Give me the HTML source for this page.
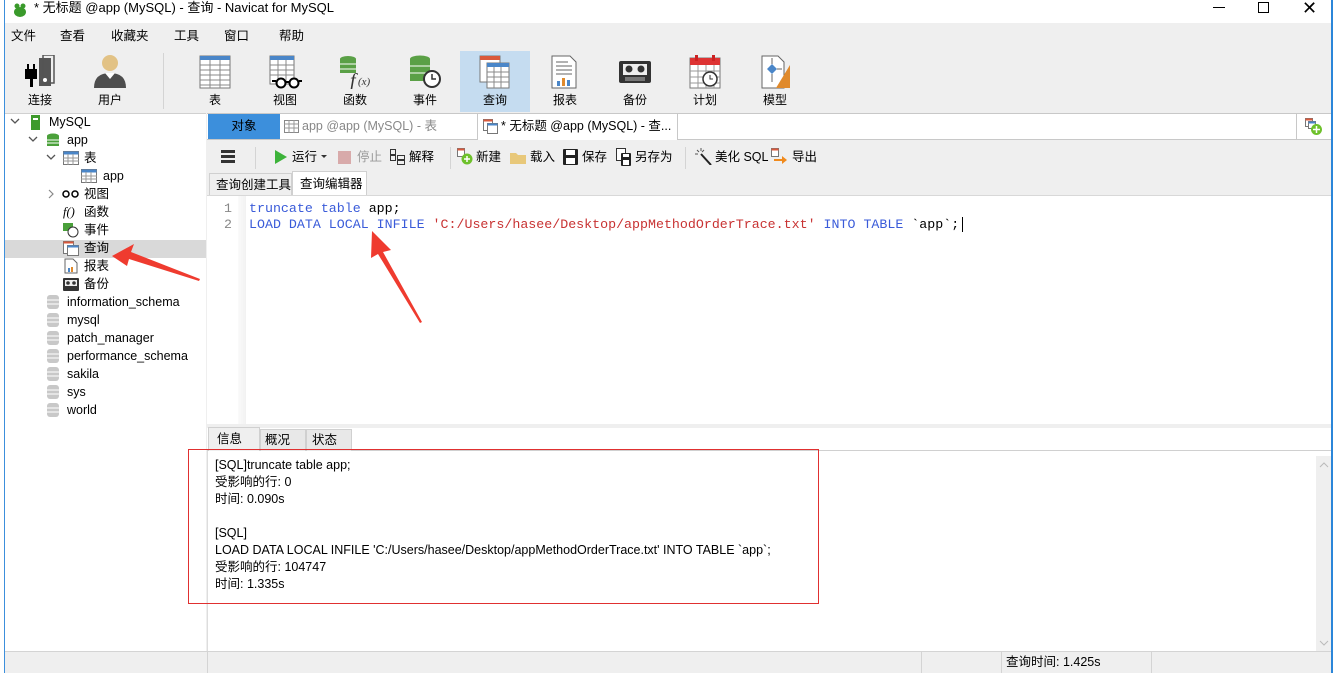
<!DOCTYPE html>
<html><head><meta charset="utf-8"><style>
*{margin:0;padding:0;box-sizing:border-box}
body{width:1333px;height:673px;overflow:hidden;background:#efefef;font-family:"Liberation Sans","Noto Sans CJK SC",sans-serif;font-size:12px;line-height:16px;color:#000;position:relative}
.a{position:absolute;white-space:nowrap}
.mono{font-family:"Liberation Mono","Noto Sans CJK SC",monospace;font-size:13.3px;line-height:16px}
.kw{color:#3a5bd9}.st{color:#c83232}
.tb{position:absolute;top:51px;width:70px;height:61px;text-align:center}
.tb svg{position:absolute;left:18px;top:4px}
.tb span{position:absolute;left:0;right:0;top:41px;font-size:12px;line-height:16px}
.tr{position:absolute;font-size:12.5px;line-height:16px;white-space:nowrap}
</style></head><body>
<div class="a" style="left:0;top:0;width:5px;height:673px;background:#fff;border-right:1px solid #3c8fdc"></div>
<div class="a" style="right:0;top:0;width:2px;height:673px;background:#2b86d9"></div>
<div class="a" style="left:5px;top:0;width:1326px;height:23px;background:#fff"></div>
<svg class="a" style="left:12px;top:2px" width="16" height="16"><ellipse cx="8" cy="10" rx="6" ry="5" fill="#3a9a2b"/><circle cx="5" cy="4" r="2.5" fill="#3a9a2b"/><circle cx="11" cy="4" r="2.5" fill="#3a9a2b"/></svg>
<div class="a" style="left:34px;top:0px;font-size:13px">* 无标题 @app (MySQL) - 查询 - Navicat for MySQL</div>
<div class="a" style="left:1213px;top:7px;width:12px;height:1px;background:#000"></div>
<div class="a" style="left:1258px;top:2px;width:11px;height:11px;border:1px solid #000"></div>
<div class="a" style="left:1302px;top:-1px;font-size:18px;line-height:18px">✕</div>
<div class="tr" style="left:11px;top:28px">文件</div>
<div class="tr" style="left:60px;top:28px">查看</div>
<div class="tr" style="left:111px;top:28px">收藏夹</div>
<div class="tr" style="left:174px;top:28px">工具</div>
<div class="tr" style="left:224px;top:28px">窗口</div>
<div class="tr" style="left:279px;top:28px">帮助</div>
<div class="a" style="left:163px;top:53px;width:1px;height:56px;background:#d4d4d4"></div>
<div class="a" style="left:460px;top:51px;width:70px;height:61px;background:#c5dcf0"></div>
<div class="tb" style="left:5px"><svg width="34" height="34"><rect x="16" y="3" width="12" height="28" fill="#555"/><rect x="20" y="0" width="11" height="28" fill="none" stroke="#555" stroke-width="1.5"/><rect x="2" y="14" width="12" height="10" fill="#000"/><rect x="7" y="24" width="3" height="8" fill="#000"/><rect x="4" y="9" width="2" height="5" fill="#000"/><rect x="10" y="9" width="2" height="5" fill="#000"/><circle cx="22" cy="25" r="2" fill="#fff"/></svg><span>连接</span></div>
<div class="tb" style="left:75px"><svg width="34" height="34"><circle cx="17" cy="8" r="8" fill="#e2c285"/><path d="M1 33 Q1 18 17 18 Q33 18 33 33Z" fill="#4d4d4d"/><path d="M12 18 L17 24 L22 18Z" fill="#fff"/></svg><span>用户</span></div>
<div class="tb" style="left:180px"><svg width="34" height="34"><rect x="2" y="1" width="30" height="32" fill="#fff" stroke="#777"/><rect x="2" y="1" width="30" height="4" fill="#4a86c8"/><path d="M2 10H32M2 15H32M2 20H32M2 25H32M2 30H32M12 5V33M22 5V33" stroke="#888"/></svg><span>表</span></div>
<div class="tb" style="left:250px"><svg width="34" height="34"><rect x="2" y="1" width="24" height="28" fill="#fff" stroke="#777"/><rect x="2" y="1" width="24" height="4" fill="#4a86c8"/><path d="M2 10H26M2 15H26M2 20H26M10 5V29M18 5V29" stroke="#888"/><circle cx="13" cy="28" r="4.5" fill="#fff" stroke="#000" stroke-width="2"/><circle cx="26" cy="28" r="4.5" fill="#fff" stroke="#000" stroke-width="2"/><path d="M17 27H22M4 26H8M31 26H34" stroke="#000" stroke-width="2"/></svg><span>视图</span></div>
<div class="tb" style="left:320px"><svg width="34" height="34"><ellipse cx="10" cy="4" rx="8" ry="3" fill="#5aa046"/><rect x="2" y="4" width="16" height="14" fill="#5aa046"/><path d="M2 9H18M2 14H18" stroke="#fff"/><text x="12" y="32" font-family="Liberation Serif" font-style="italic" font-size="20" fill="#333">f</text><text x="20" y="30" font-family="Liberation Serif" font-style="italic" font-size="11" fill="#333">(x)</text></svg><span>函数</span></div>
<div class="tb" style="left:390px"><svg width="34" height="34"><ellipse cx="12" cy="4" rx="10" ry="3.5" fill="#5aa046"/><rect x="2" y="4" width="20" height="22" fill="#5aa046"/><path d="M2 11H22M2 18H22" stroke="#fff"/><circle cx="24" cy="24" r="8" fill="#fff" stroke="#333" stroke-width="2"/><path d="M24 19V24H28" stroke="#333" stroke-width="1.5" fill="none"/></svg><span>事件</span></div>
<div class="tb" style="left:460px"><svg width="34" height="34"><rect x="2" y="1" width="20" height="26" fill="#fff" stroke="#777"/><rect x="2" y="1" width="20" height="4" fill="#d9593c"/><rect x="9" y="8" width="22" height="25" fill="#fff" stroke="#777"/><rect x="9" y="8" width="22" height="4" fill="#4a86c8"/><path d="M9 17H31M9 22H31M9 27H31M16 12V33M23 12V33" stroke="#888"/></svg><span>查询</span></div>
<div class="tb" style="left:530px"><svg width="34" height="34"><path d="M4 1H22L28 7V33H4Z" fill="#fff" stroke="#666"/><path d="M8 7H20M8 11H24M8 15H24M8 19H24" stroke="#666"/><rect x="9" y="26" width="3" height="5" fill="#4a86c8"/><rect x="14" y="23" width="3" height="8" fill="#e08a2c"/><rect x="19" y="25" width="3" height="6" fill="#4a86c8"/></svg><span>报表</span></div>
<div class="tb" style="left:600px"><svg width="34" height="34"><rect x="1" y="6" width="32" height="22" rx="2" fill="#333"/><rect x="5" y="9" width="24" height="11" fill="#eee"/><circle cx="11" cy="14" r="3.5" fill="#333"/><circle cx="23" cy="14" r="3.5" fill="#333"/><rect x="7" y="22" width="20" height="4" fill="#777"/></svg><span>备份</span></div>
<div class="tb" style="left:670px"><svg width="34" height="34"><rect x="2" y="3" width="30" height="30" fill="#fff" stroke="#777"/><rect x="2" y="3" width="30" height="7" fill="#d33"/><rect x="7" y="0" width="3" height="6" fill="#c22"/><rect x="24" y="0" width="3" height="6" fill="#c22"/><path d="M2 16H32M2 22H32M2 28H32M10 10V33M18 10V33M26 10V33" stroke="#999"/><circle cx="22" cy="24" r="7" fill="#fff" stroke="#333" stroke-width="1.5"/><path d="M22 20V24H25" stroke="#333" fill="none"/></svg><span>计划</span></div>
<div class="tb" style="left:740px"><svg width="34" height="34"><path d="M4 1H20L26 7V33H4Z" fill="#fff" stroke="#666"/><path d="M14 9L19 14L14 19L9 14Z" fill="#4a86c8"/><path d="M14 3V9M14 19V27M19 14H24" stroke="#666"/><path d="M32 10V33H18Z" fill="#e08a2c"/></svg><span>模型</span></div>
<!-- sidebar -->
<div class="a" style="left:5px;top:113px;width:201px;height:538px;background:#fff;border-top:1px solid #d0d0d0"></div>
<div class="a" style="left:5px;top:240px;width:201px;height:18px;background:#d9d9d9"></div>
<svg class="a" style="left:10px;top:118px" width="10" height="8"><path d="M1 1L5 5L9 1" stroke="#555" fill="none" stroke-width="1.3"/></svg>
<svg class="a" style="left:30px;top:115px" width="12" height="15"><rect x="1" y="0" width="9" height="15" fill="#3e9a2c"/><rect x="3" y="3" width="5" height="2" fill="#fff"/></svg>
<div class="tr" style="left:49px;top:114px">MySQL</div>
<svg class="a" style="left:28px;top:136px" width="10" height="8"><path d="M1 1L5 5L9 1" stroke="#555" fill="none" stroke-width="1.3"/></svg>
<svg class="a" style="left:46px;top:133px" width="14" height="15"><ellipse cx="7" cy="3" rx="6" ry="2.5" fill="#4aa03a"/><rect x="1" y="3" width="12" height="10" fill="#4aa03a"/><path d="M1 7H13M1 10H13" stroke="#fff"/></svg>
<div class="tr" style="left:67px;top:132px">app</div>
<svg class="a" style="left:46px;top:154px" width="10" height="8"><path d="M1 1L5 5L9 1" stroke="#555" fill="none" stroke-width="1.3"/></svg>
<svg class="a" style="left:63px;top:151px" width="16" height="14"><rect x="0.5" y="0.5" width="15" height="13" fill="#fff" stroke="#777"/><rect x="0.5" y="0.5" width="15" height="3" fill="#4a86c8"/><path d="M0 7H16M0 10H16M5 3V14M10 3V14" stroke="#999"/></svg>
<div class="tr" style="left:84px;top:150px">表</div>
<svg class="a" style="left:81px;top:169px" width="16" height="14"><rect x="0.5" y="0.5" width="15" height="13" fill="#fff" stroke="#777"/><rect x="0.5" y="0.5" width="15" height="3" fill="#4a86c8"/><path d="M0 7H16M0 10H16M5 3V14M10 3V14" stroke="#999"/></svg>
<div class="tr" style="left:103px;top:168px">app</div>
<svg class="a" style="left:47px;top:189px" width="8" height="10"><path d="M2 1L6 5L2 9" stroke="#888" fill="none" stroke-width="1.2"/></svg>
<svg class="a" style="left:62px;top:190px" width="18" height="8"><circle cx="4" cy="4" r="3" fill="none" stroke="#000" stroke-width="1.5"/><circle cx="13" cy="4" r="3" fill="none" stroke="#000" stroke-width="1.5"/></svg>
<div class="tr" style="left:84px;top:186px">视图</div>
<div class="tr" style="left:63px;top:204px;font-family:'Liberation Serif';font-style:italic">f()</div>
<div class="tr" style="left:84px;top:204px">函数</div>
<svg class="a" style="left:63px;top:223px" width="16" height="15"><rect x="0" y="0" width="10" height="8" fill="#4aa03a"/><circle cx="10" cy="9" r="5" fill="#fff" stroke="#333"/></svg>
<div class="tr" style="left:84px;top:222px">事件</div>
<svg class="a" style="left:63px;top:241px" width="16" height="15"><rect x="0.5" y="0.5" width="10" height="12" fill="#fff" stroke="#777"/><rect x="0.5" y="0.5" width="10" height="2" fill="#d9593c"/><rect x="4.5" y="4.5" width="11" height="10" fill="#fff" stroke="#777"/><rect x="4.5" y="4.5" width="11" height="2" fill="#4a86c8"/></svg>
<div class="tr" style="left:84px;top:240px">查询</div>
<svg class="a" style="left:64px;top:258px" width="14" height="16"><path d="M1 1H9L13 5V15H1Z" fill="#fff" stroke="#666"/><rect x="4" y="10" width="2" height="4" fill="#4a86c8"/><rect x="7" y="9" width="2" height="5" fill="#e08a2c"/></svg>
<div class="tr" style="left:84px;top:258px">报表</div>
<svg class="a" style="left:63px;top:278px" width="16" height="13"><rect x="0" y="0" width="16" height="13" rx="1" fill="#333"/><rect x="2" y="2" width="12" height="6" fill="#eee"/><circle cx="5" cy="5" r="1.8" fill="#333"/><circle cx="11" cy="5" r="1.8" fill="#333"/></svg>
<div class="tr" style="left:84px;top:276px">备份</div>
<svg class="a" style="left:46px;top:295px" width="14" height="125">
<g fill="#c8c8c8"><rect x="1" y="0" width="12" height="14" rx="3"/><rect x="1" y="18" width="12" height="14" rx="3"/><rect x="1" y="36" width="12" height="14" rx="3"/><rect x="1" y="54" width="12" height="14" rx="3"/><rect x="1" y="72" width="12" height="14" rx="3"/><rect x="1" y="90" width="12" height="14" rx="3"/><rect x="1" y="108" width="12" height="14" rx="3"/></g>
<path d="M1 5H13M1 9H13M1 23H13M1 27H13M1 41H13M1 45H13M1 59H13M1 63H13M1 77H13M1 81H13M1 95H13M1 99H13M1 113H13M1 117H13" stroke="#fff"/>
</svg>
<div class="tr" style="left:67px;top:294px">information_schema</div>
<div class="tr" style="left:67px;top:312px">mysql</div>
<div class="tr" style="left:67px;top:330px">patch_manager</div>
<div class="tr" style="left:67px;top:348px">performance_schema</div>
<div class="tr" style="left:67px;top:366px">sakila</div>
<div class="tr" style="left:67px;top:384px">sys</div>
<div class="tr" style="left:67px;top:402px">world</div>
<!-- tab row -->
<div class="a" style="left:207px;top:113px;width:1124px;height:27px;background:#fff;border-top:1px solid #c8c8c8;border-bottom:1px solid #c8c8c8"></div>
<div class="a" style="left:208px;top:114px;width:72px;height:25px;background:#3c8fdc;color:#000;text-align:center;line-height:25px;font-size:12.5px">对象</div>
<div class="a" style="left:280px;top:114px;width:198px;height:25px;border-right:1px solid #c8c8c8;color:#888;font-size:12.5px;line-height:25px;padding-left:22px">app @app (MySQL) - 表</div>
<svg class="a" style="left:284px;top:120px" width="15" height="13"><rect x="0.5" y="0.5" width="14" height="12" fill="#fff" stroke="#888"/><path d="M0 4H15M0 8H15M5 0V13M10 0V13" stroke="#999"/></svg>
<div class="a" style="left:478px;top:114px;width:200px;height:26px;background:#fff;border-right:1px solid #c8c8c8;font-size:12.5px;line-height:25px;padding-left:23px">* 无标题 @app (MySQL) - 查...</div>
<svg class="a" style="left:483px;top:119px" width="15" height="15"><rect x="0.5" y="0.5" width="9" height="11" fill="#fff" stroke="#777"/><rect x="0.5" y="0.5" width="9" height="2" fill="#d9593c"/><rect x="4.5" y="4.5" width="10" height="10" fill="#fff" stroke="#777"/><rect x="4.5" y="4.5" width="10" height="2" fill="#4a86c8"/></svg>
<div class="a" style="left:1296px;top:114px;width:1px;height:25px;background:#c8c8c8"></div>
<svg class="a" style="left:1305px;top:118px" width="18" height="18"><rect x="0.5" y="0.5" width="7" height="8" fill="#fff" stroke="#777"/><rect x="0.5" y="0.5" width="7" height="2" fill="#d9593c"/><rect x="3.5" y="3.5" width="7" height="7" fill="#fff" stroke="#777"/><rect x="3.5" y="3.5" width="7" height="2" fill="#4a86c8"/><circle cx="11.5" cy="11.5" r="5.5" fill="#6ec12b"/><path d="M11.5 8V15M8 11.5H15" stroke="#fff" stroke-width="1.5"/></svg>
<!-- query toolbar -->
<div class="a" style="left:221px;top:150px;width:14px;height:3px;background:#333;box-shadow:0 5px 0 #333,0 10px 0 #333"></div>
<div class="a" style="left:255px;top:147px;width:1px;height:22px;background:#d4d4d4"></div>
<div class="a" style="left:450px;top:147px;width:1px;height:22px;background:#d4d4d4"></div>
<div class="a" style="left:685px;top:147px;width:1px;height:22px;background:#d4d4d4"></div>
<svg class="a" style="left:275px;top:150px" width="12" height="14"><path d="M0 0L12 7L0 14Z" fill="#3db33a"/></svg>
<div class="tr" style="left:292px;top:149px">运行</div>
<svg class="a" style="left:321px;top:155px" width="6" height="4"><path d="M0 0H6L3 3Z" fill="#333"/></svg>
<div class="a" style="left:338px;top:151px;width:13px;height:13px;background:#d8aaaa"></div>
<div class="tr" style="left:357px;top:149px;color:#999">停止</div>
<svg class="a" style="left:390px;top:149px" width="16" height="16"><rect x="0.5" y="0.5" width="5" height="5" fill="none" stroke="#333"/><rect x="0.5" y="6.5" width="5" height="5" fill="none" stroke="#333"/><rect x="7.5" y="6.5" width="7" height="4" fill="none" stroke="#333"/><rect x="7.5" y="11.5" width="7" height="4" fill="none" stroke="#333"/></svg>
<div class="tr" style="left:409px;top:149px">解释</div>
<svg class="a" style="left:457px;top:148px" width="17" height="17"><rect x="0.5" y="0.5" width="7" height="8" fill="#fff" stroke="#777"/><rect x="0.5" y="0.5" width="7" height="2" fill="#d9593c"/><circle cx="10" cy="11" r="5.5" fill="#6ec12b"/><path d="M10 8V14M7 11H13" stroke="#fff" stroke-width="1.5"/></svg>
<div class="tr" style="left:476px;top:149px">新建</div>
<svg class="a" style="left:510px;top:151px" width="17" height="13"><path d="M0 2H6L8 4H16V13H0Z" fill="#e8c87a"/></svg>
<div class="tr" style="left:530px;top:149px">载入</div>
<svg class="a" style="left:563px;top:149px" width="15" height="16"><rect x="0" y="0" width="15" height="16" rx="1" fill="#222"/><rect x="3" y="1" width="9" height="5" fill="#fff"/><rect x="3" y="9" width="9" height="6" fill="#fff"/></svg>
<div class="tr" style="left:582px;top:149px">保存</div>
<svg class="a" style="left:616px;top:148px" width="15" height="18"><rect x="0.5" y="0.5" width="9" height="12" fill="#fff" stroke="#333"/><rect x="5" y="5" width="10" height="13" rx="1" fill="#222"/><rect x="7" y="6" width="6" height="3" fill="#fff"/><rect x="7" y="12" width="6" height="5" fill="#fff"/></svg>
<div class="tr" style="left:635px;top:149px">另存为</div>
<svg class="a" style="left:695px;top:148px" width="17" height="17"><path d="M6 6L16 17" stroke="#222" stroke-width="2"/><path d="M2 2L4 4M6 0V3M0 6H3M9 2L7 4" stroke="#555"/></svg>
<div class="tr" style="left:715px;top:149px">美化 SQL</div>
<svg class="a" style="left:771px;top:148px" width="17" height="17"><rect x="0.5" y="0.5" width="7" height="8" fill="#fff" stroke="#777"/><rect x="0.5" y="0.5" width="7" height="2" fill="#d9593c"/><path d="M3 11H11V8L16 12L11 16V13H3Z" fill="#f08a1c"/></svg>
<div class="tr" style="left:792px;top:149px">导出</div>
<!-- subtabs -->
<div class="a" style="left:209px;top:173px;width:83px;height:22px;border:1px solid #d0d0d0;border-bottom:none;background:#efefef;font-size:12.5px;line-height:22px;padding-left:6px">查询创建工具</div>
<div class="a" style="left:292px;top:171px;width:75px;height:25px;border:1px solid #d0d0d0;border-bottom:none;background:#fff;font-size:12.5px;line-height:24px;padding-left:7px">查询编辑器</div>
<!-- editor -->
<div class="a" style="left:207px;top:195px;width:1124px;height:229px;background:#fff;border-top:1px solid #d8d8d8"></div>
<div class="a" style="left:238px;top:196px;width:8px;height:228px;background:linear-gradient(90deg,#fafafa,#f2f2f2)"></div>
<div class="a mono" style="left:224px;top:201px;color:#888">1</div>
<div class="a mono" style="left:224px;top:217px;color:#888">2</div>
<div class="a mono" style="left:249px;top:201px"><span class="kw">truncate table</span> app;</div>
<div class="a mono" style="left:249px;top:217px"><span class="kw">LOAD DATA LOCAL INFILE</span> <span class="st">'C:/Users/hasee/Desktop/appMethodOrderTrace.txt'</span> <span class="kw">INTO TABLE</span> `app`;</div>
<div class="a" style="left:962px;top:217px;width:1px;height:15px;background:#000"></div>
<!-- result tabs -->
<div class="a" style="left:207px;top:424px;width:1124px;height:4px;background:#efefef"></div>
<div class="a" style="left:207px;top:428px;width:1124px;height:23px;background:#fff;border-bottom:1px solid #d0d0d0"></div>
<div class="a" style="left:208px;top:427px;width:52px;height:24px;background:#efefef;border:1px solid #d0d0d0;border-bottom:none;font-size:12.5px;line-height:22px;padding-left:8px">信息</div>
<div class="a" style="left:260px;top:429px;width:46px;height:22px;background:#e8e8e8;border:1px solid #d0d0d0;border-bottom:none;font-size:12.5px;line-height:20px;padding-left:4px">概况</div>
<div class="a" style="left:306px;top:429px;width:46px;height:22px;background:#e8e8e8;border:1px solid #d0d0d0;border-bottom:none;font-size:12.5px;line-height:20px;padding-left:5px">状态</div>
<div class="a" style="left:207px;top:451px;width:1124px;height:200px;background:#fff"></div>
<div class="a" style="left:1316px;top:456px;width:15px;height:195px;background:#efefef"></div>
<svg class="a" style="left:1319px;top:462px" width="10" height="6"><path d="M1 5L5 1L9 5" stroke="#bbb" fill="none"/></svg>
<svg class="a" style="left:1319px;top:640px" width="10" height="6"><path d="M1 1L5 5L9 1" stroke="#bbb" fill="none"/></svg>
<div class="a" style="left:207px;top:451px;width:1px;height:200px;background:#ddd"></div>
<div class="a" style="left:188px;top:449px;width:631px;height:155px;border:1px solid #e03030"></div>
<div class="a" style="left:215px;top:457px;font-size:12.5px;line-height:17px;white-space:pre">[SQL]truncate table app;
受影响的行: 0
时间: 0.090s

[SQL]
LOAD DATA LOCAL INFILE 'C:/Users/hasee/Desktop/appMethodOrderTrace.txt' INTO TABLE `app`;
受影响的行: 104747
时间: 1.335s</div>
<!-- status bar -->
<div class="a" style="left:5px;top:651px;width:1326px;height:22px;background:#efefef;border-top:1px solid #d4d4d4"></div>
<div class="a" style="left:207px;top:652px;width:1px;height:21px;background:#d4d4d4"></div>
<div class="a" style="left:921px;top:652px;width:1px;height:21px;background:#d4d4d4"></div>
<div class="a" style="left:1001px;top:652px;width:1px;height:21px;background:#d4d4d4"></div>
<div class="a" style="left:1151px;top:652px;width:1px;height:21px;background:#d4d4d4"></div>
<div class="tr" style="left:1006px;top:654px">查询时间: 1.425s</div>
<svg class="a" style="left:0;top:0" width="1333" height="673">
<path d="M112 256 L134 244 L131 252 L200 279 L199 281 L129 259 L127 266 Z" fill="#ef3b2f"/>
<path d="M372 231 L391 250 L383 252 L422 322 L420 323 L378 254 L371 258 Z" fill="#ef3b2f"/>
</svg>
</body></html>
